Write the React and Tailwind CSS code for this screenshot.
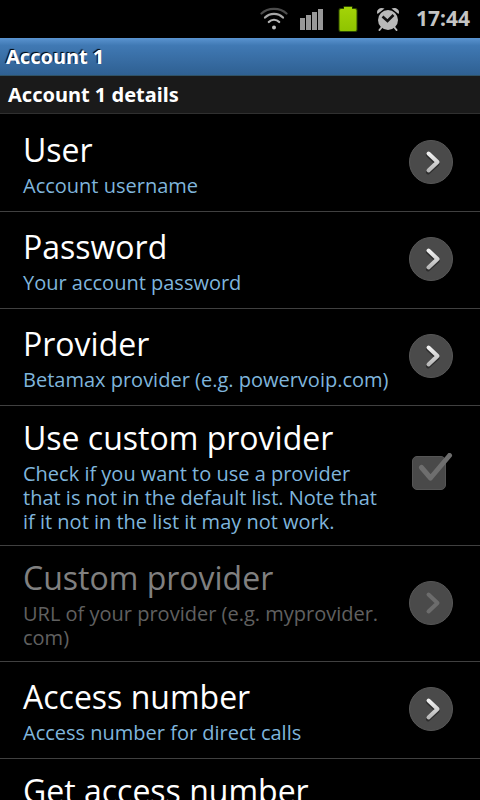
import { useState } from 'react'

const preferences = [
  { key: 'user', title: 'User', summary: 'Account username' },
  { key: 'password', title: 'Password', summary: 'Your account password' },
  { key: 'provider', title: 'Provider', summary: 'Betamax provider (e.g. powervoip.com)' },
  {
    key: 'useCustom',
    title: 'Use custom provider',
    summary: 'Check if you want to use a provider that is not in the default list. Note that if it not in the list it may not work.',
    type: 'checkbox'
  },
  {
    key: 'custom',
    title: 'Custom provider',
    // zero-width space lets the host name wrap after the dot
    summary: 'URL of your provider (e.g. myprovider.\u200bcom)',
    dependsOn: 'useCustom'
  },
  { key: 'access', title: 'Access number', summary: 'Access number for direct calls' }
]

function WifiIcon() {
  return (
    <svg className="w-7 h-6" viewBox="0 0 28 24" fill="none" strokeWidth="2.2" strokeLinecap="round">
      <path d="M1.5 6.5C8 0.2 20 0.2 26.5 6.5" stroke="#4c4c4c" />
      <path d="M5 10.6C9.8 5.6 18.2 5.6 23 10.6" stroke="#a8a8a8" />
      <path d="M8.8 15C11.6 12 16.4 12 19.2 15" stroke="#b4b4b4" />
      <circle cx="14" cy="20.5" r="2" fill="#c0c0c0" />
    </svg>
  )
}

function SignalIcon() {
  return (
    <svg className="w-6 h-6" viewBox="0 0 24 24">
      <g fill="#989898">
        <rect x="0" y="11" width="5" height="12" />
        <rect x="6" y="8" width="5" height="15" />
        <rect x="12" y="5" width="5" height="18" />
        <rect x="18" y="2" width="5" height="21" />
      </g>
    </svg>
  )
}

function BatteryIcon() {
  return (
    <svg className="w-6 h-7" viewBox="0 0 24 28">
      <defs>
        <linearGradient id="charge" x1="0" y1="0" x2="0" y2="1">
          <stop offset="0" stopColor="#a4d408" />
          <stop offset="1" stopColor="#8fc400" />
        </linearGradient>
      </defs>
      <path d="M2.5 5a2 2 0 0 1 2-2h3V1h9v2h3a2 2 0 0 1 2 2v20a2 2 0 0 1-2 2h-15a2 2 0 0 1-2-2z" fill="#2f4a00" />
      <path d="M3.5 5.5a1.5 1.5 0 0 1 1.5-1.500h3V2h8v2h3a1.5 1.5 0 0 1 1.5 1.5v19a1.5 1.5 0 0 1-1.5 1.5h-14a1.5 1.5 0 0 1-1.5-1.5z" fill="url(#charge)" />
    </svg>
  )
}

function AlarmIcon() {
  return (
    <svg className="w-6 h-6" viewBox="0 0 24 24">
      <g fill="#b9b9b9">
        <circle cx="12" cy="13" r="10" />
        <path d="M1.5 7C-0.5 3 4 -0.5 8.5 1.5z" />
        <path d="M22.5 7C24.5 3 20 -0.5 15.5 1.5z" />
      </g>
      <path d="M5.5 20.5L3.5 23M18.5 20.5L20.5 23" stroke="#b9b9b9" strokeWidth="2" strokeLinecap="round" />
      <path d="M6.5 9.5L11.5 14L17.5 8" fill="none" stroke="#111" strokeWidth="2.6" />
    </svg>
  )
}

function ChevronCircle({ disabled }) {
  return (
    <svg className="w-11 h-11 shrink-0" viewBox="0 0 44 44">
      <defs>
        <linearGradient id="arrow" x1="0" y1="0" x2="0" y2="1">
          <stop offset="0" stopColor="#f0f0f0" />
          <stop offset="1" stopColor="#b8b8b8" />
        </linearGradient>
      </defs>
      <circle cx="22" cy="22" r="21.5" fill="#4a4a4a" stroke="#585858" />
      {!disabled && (
        <path d="M19 15L28.5 24L19 32.5" fill="none" stroke="#2c2c2c" strokeWidth="4" strokeLinecap="round" strokeLinejoin="round" />
      )}
      <path
        d="M19.5 13.5L28.5 22L19.5 30.5"
        fill="none"
        stroke={disabled ? '#6c6c6c' : 'url(#arrow)'}
        strokeWidth="4"
        strokeLinecap="round"
        strokeLinejoin="round"
      />
    </svg>
  )
}

function CheckBox({ id, checked, onChange }) {
  return (
    <span className="relative w-11 h-11 shrink-0">
      <input
        id={id}
        type="checkbox"
        checked={checked}
        onChange={onChange}
        className="block appearance-none w-full h-full cursor-pointer"
      />
      <svg className="absolute inset-0 w-11 h-11 pointer-events-none" viewBox="0 0 44 44">
        <rect x="3.5" y="3.5" width="33" height="33" rx="4.5" fill="#494949" stroke="#555" />
        <path
          d="M12.5 14.5L21.5 25L40.5 2.5"
          fill="none"
          stroke={checked ? '#8ccb1e' : '#6e6e6e'}
          strokeWidth="5"
          strokeLinecap="round"
          strokeLinejoin="round"
        />
      </svg>
    </span>
  )
}

function PreferenceText({ title, summary, disabled }) {
  return (
    <span className="flex flex-col flex-1 min-w-0 gap-0.5">
      <span className={`text-[32px] leading-[45px] ${disabled ? 'text-[#808080]' : 'text-white'}`}>{title}</span>
      {summary && (
        <span className={`text-xl leading-6 ${disabled ? 'text-[#606060]' : 'text-[#7fb5dc]'}`}>
          {summary}
        </span>
      )}
    </span>
  )
}

const rowClass = 'flex w-full min-h-24 pl-[23px] pr-[27px] pt-[9px] pb-[11px] text-left'

function App() {
  const [useCustom, setUseCustom] = useState(false)

  return (
    <div className="h-screen overflow-hidden bg-black text-white font-['Noto_Sans',sans-serif]">
      {/* Status bar */}
      <div className="flex items-center justify-end h-[38px] pr-2.5">
        <WifiIcon />
        <span className="ml-3 flex"><SignalIcon /></span>
        <span className="ml-3 flex"><BatteryIcon /></span>
        <span className="ml-4 flex"><AlarmIcon /></span>
        <span className="ml-4 text-[21px] font-bold text-[#c4c4c4]">17:44</span>
      </div>

      <header className="flex items-center h-[38px] px-1.5 bg-linear-to-b from-[#5a94d0] via-[#4079b4] via-20% to-[#2f6092] border-b border-[#2f5266]">
        <h1 className="text-xl font-bold text-shadow-[-1px_-1px_1px_#000]">Account 1</h1>
      </header>

      <main>
        <h2 className="flex items-center h-[38px] px-2 text-xl font-bold bg-[#1a1a1a] border-b border-[#303030]">
          Account 1 details
        </h2>
        <ul className="pt-px font-['Open_Sans',sans-serif]">
          {preferences.map((pref) => {
            const disabled = pref.dependsOn === 'useCustom' && !useCustom
            return (
              <li key={pref.key} className="border-b border-[#404040]">
                {pref.type === 'checkbox' ? (
                  <label htmlFor={pref.key} className={`${rowClass} items-center gap-5`}>
                    <PreferenceText title={pref.title} summary={pref.summary} />
                    <CheckBox id={pref.key} checked={useCustom} onChange={(e) => setUseCustom(e.target.checked)} />
                  </label>
                ) : (
                  <button type="button" disabled={disabled} className={`${rowClass} items-center gap-3`}>
                    <PreferenceText title={pref.title} summary={pref.summary} disabled={disabled} />
                    <ChevronCircle disabled={disabled} />
                  </button>
                )}
              </li>
            )
          })}
          <li>
            <button type="button" className={`${rowClass} items-start`}>
              <PreferenceText title="Get access number" />
            </button>
          </li>
        </ul>
      </main>
    </div>
  )
}

export default App
